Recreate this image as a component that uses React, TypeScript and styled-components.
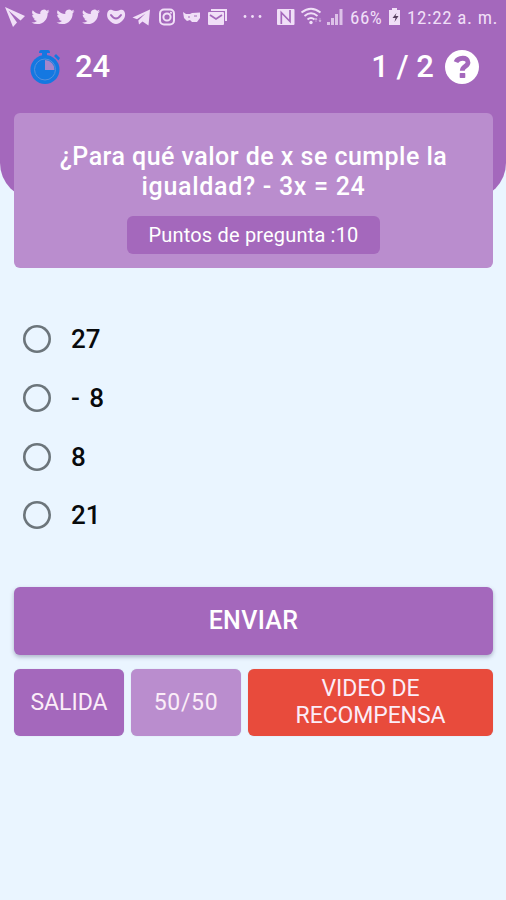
import React from "react";
import styled, { createGlobalStyle } from "styled-components";

const purple = "#a468bc";
const lilac = "#ba8dce";

const GlobalStyle = createGlobalStyle`
  * { box-sizing: border-box; }
  html, body { margin: 0; background: #eaf5ff; }
  body { font-family: Roboto, "Liberation Sans", sans-serif; }
  button { font: inherit; border: 0; padding: 0; }
`;

const Screen = styled.main`
  width: 506px;
  height: 900px;
  overflow: hidden;
  background: #eaf5ff;
`;
const Header = styled.header`
  height: 199px;
  background: ${purple};
  border-radius: 0 0 36px 36px;
  color: #fff;
`;
const StatusBar = styled.div`
  height: 35px;
  display: flex;
  align-items: center;
  color: #f0dff7;
`;
const StatusIcons = styled.svg`
  display: block;
  flex: none;
`;
const StatusText = styled.span<{ $width: number; $spacing: number }>`
  flex: none;
  width: ${(p) => p.$width}px;
  font-family: "Roboto Condensed", Roboto, sans-serif;
  font-size: 19px;
  letter-spacing: ${(p) => p.$spacing}px;
  white-space: nowrap;
`;
const GameBar = styled.div`
  height: 64px;
  display: flex;
  align-items: center;
  padding: 0 27px 0 29px;
`;
const Score = styled.span<{ $word?: number; $push?: boolean }>`
  font-size: 31px;
  font-weight: 500;
  position: relative;
  top: -1px;
  word-spacing: ${(p) => p.$word ?? 0}px;
  margin-left: ${(p) => (p.$push ? "auto" : "13px")};
  white-space: pre;
`;
const Help = styled.svg`
  margin-left: 11px;
`;
const Content = styled.div`
  position: relative;
  margin-top: -86px;
  padding: 0 13px 0 14px;
`;
const QuestionCard = styled.section`
  height: 155px;
  padding-top: 29px;
  border-radius: 6px;
  background: ${lilac};
  color: #fff;
  display: flex;
  flex-direction: column;
  align-items: center;
`;
const QuestionLine = styled.div<{ $spacing: number }>`
  height: 30px;
  line-height: 30px;
  font-size: 25px;
  font-weight: 500;
  letter-spacing: ${(p) => p.$spacing}px;
  white-space: nowrap;
`;
const Points = styled.div`
  margin-top: 14px;
  width: 253px;
  height: 38px;
  line-height: 38px;
  border-radius: 6px;
  background: ${purple};
  font-size: 20px;
  letter-spacing: 0.18px;
  text-align: center;
`;
const Options = styled.div`
  margin-top: 42px;
  padding-left: 9px;
`;
const Option = styled.label`
  height: 58.7px;
  display: flex;
  align-items: center;
  gap: 20px;
  color: #080a0c;
  font-size: 26px;
  font-weight: 500;
  word-spacing: 3px;
`;
const Radio = styled.input`
  appearance: none;
  width: 28px;
  height: 28px;
  margin: 0;
  border-radius: 50%;
  box-shadow: inset 0 0 0 2.6px #6c757b;
`;
const Submit = styled.button`
  display: block;
  width: 100%;
  height: 68px;
  margin-top: 42px;
  padding-bottom: 1px;
  border-radius: 6px;
  background: ${purple};
  color: #fff;
  font-size: 25px;
  font-weight: 500;
  letter-spacing: 0.35px;
  box-shadow: 0 2px 4px rgba(70, 70, 110, 0.38);
`;
const Actions = styled.div`
  display: grid;
  grid-template-columns: 110px 110px 245px;
  gap: 7px;
  margin-top: 14px;
`;
const Action = styled.button<{ $color: string; $spacing: number }>`
  height: 67px;
  border-radius: 6px;
  background: ${(p) => p.$color};
  color: #fbedf8;
  font-size: 23px;
  line-height: 27px;
  letter-spacing: ${(p) => p.$spacing}px;
  box-shadow: 0 0 1px rgba(70, 70, 110, 0.3);
`;

const BIRD =
  "M23.95 4.57a10 10 0 0 1-2.82.77 4.96 4.96 0 0 0 2.16-2.72c-.95.55-2 .96-3.13 1.18a4.92 4.92 0 0 0-8.38 4.48C7.69 8.1 4.07 6.13 1.64 3.16a4.92 4.92 0 0 0 1.52 6.57 4.9 4.9 0 0 1-2.23-.61v.06a4.92 4.92 0 0 0 3.95 4.83 5 5 0 0 1-2.21.08 4.94 4.94 0 0 0 4.6 3.42A9.87 9.87 0 0 1 0 19.54a13.99 13.99 0 0 0 7.55 2.21c9.05 0 14-7.5 14-13.98 0-.21 0-.42-.02-.63a9.94 9.94 0 0 0 2.42-2.57z";

const Notifications = () => (
  <StatusIcons width="350" height="35" viewBox="0 0 350 35" fill="currentColor">
    <path d="M5 7 25 16 20.5 20.5 8.5 10.5 17 22.5 13 27Z" />
    {[31.5, 56.5, 82].map((x) => (
      <path key={x} d={BIRD} transform={`translate(${x} 7.8) scale(.75)`} />
    ))}
    <path d="M112 10Q116 12 120 10C125 8 127 16 123 20Q116 28 109 20C105 15 108 8 112 10Z" />
    <path d="M111 15Q116 22 121 15" fill="none" stroke={purple} strokeWidth="2" strokeLinecap="round" />
    <path d="M132.5 17.5 150 9.5 148.5 25.5 142.5 21.5 139 24.5 138.3 20.5 145.5 13.5 137 19.3Z" />
    <g fill="none" stroke="currentColor" strokeWidth="2">
      <rect x="160" y="9.5" width="14" height="15" rx="4" />
      <circle cx="167" cy="17" r="3.6" />
    </g>
    <circle cx="171" cy="12.8" r="1" />
    <path d="M183 12 186 14H190L192 13 200 12.5V18L197 22H192L190 20 187 21 184 18Z" />
    <path d="M188 17h2m4-1h3" stroke={purple} strokeWidth="1" />
    <path d="M211 9H227V21H225V11H211Z" />
    <rect x="208" y="12" width="16" height="13" rx="1" />
    <path d="m210 15 6 4 6-4" fill="none" stroke={purple} strokeWidth="1.8" />
    <circle cx="245" cy="16.5" r="1.4" />
    <circle cx="252.5" cy="16.5" r="1.4" />
    <circle cx="260" cy="16.5" r="1.4" />
    <rect x="277" y="9" width="17.5" height="16" rx="1" />
    <path d="M281.3 24V12.5L290 21.5V10" fill="none" stroke={purple} strokeWidth="1.7" />
    <g fill="none" stroke="currentColor" strokeWidth="1.9">
      <path d="M301.5 12.5Q311 5 320.5 12.5M304.5 16Q311 10.5 317.5 16M307.5 19.5Q311 16.5 314.5 19.5" />
    </g>
    <circle cx="311" cy="22.5" r="1.7" />
    <path d="M316 22v-4m-1 2 1-2 1 2M320 18v4m-1-2 1 2 1-2" stroke="currentColor" strokeWidth=".7" opacity=".6" />
    <path d="M327 25v-3h3v3ZM331 25v-7h3v7ZM335 25V14h3v11ZM339.5 25V9h3v16Z" opacity=".75" />
  </StatusIcons>
);

const Battery = () => (
  <StatusIcons width="21" height="35" viewBox="0 0 21 35" fill="currentColor">
    <path d="M6 8h5v2h3v15H3V10h3Z" />
    <path d="m10.5 13-4 5h3l-1 4 4-6h-3Z" fill="#57405f" />
  </StatusIcons>
);

const Stopwatch = () => (
  <svg width="33" height="36" viewBox="0 0 33 36">
    <g fill="#1478e1">
      <path d="M12 1h7q2 0 2 3h-3v4h-5V4h-3q0-3 2-3ZM25 7l2-2 4 4-1.5 2.5Z" />
      <circle cx="16" cy="20.5" r="14.5" />
    </g>
    <circle cx="16" cy="20.5" r="10.5" fill="none" stroke="#5690dc" />
    <path d="M16 11v10h9.5A9.5 9.5 0 0 0 16 11Z" fill="#a486cb" />
  </svg>
);

const answers = ["27", "- 8", "8", "21"];

export default function App() {
  return (
    <>
      <GlobalStyle />
      <Screen>
        <Header>
          <StatusBar>
            <Notifications />
            <StatusText $width={36} $spacing={0.5}>66%</StatusText>
            <Battery />
            <StatusText $width={97} $spacing={0.65}>12:22 a. m.</StatusText>
          </StatusBar>
          <GameBar>
            <Stopwatch />
            <Score>24</Score>
            <Score $push>1 / 2</Score>
            <Help width="34" height="34" viewBox="0 0 34 34">
              <circle cx="17" cy="17" r="17" fill="#fff" />
              <path
                d="M11 12.2C13 7.2 23 6.6 23 12.5C23 16.5 17.3 16 17.3 20.8"
                fill="none"
                stroke={purple}
                strokeWidth="4.8"
              />
              <rect x="14.7" y="23" width="5.6" height="5" rx=".7" fill={purple} />
            </Help>
          </GameBar>
        </Header>
        <Content>
          <QuestionCard>
            <QuestionLine $spacing={0.47}>¿Para qué valor de x se cumple la</QuestionLine>
            <QuestionLine $spacing={0.7}>igualdad? - 3x = 24</QuestionLine>
            <Points>Puntos de pregunta :10</Points>
          </QuestionCard>
          <Options>
            {answers.map((answer) => (
              <Option key={answer}>
                <Radio type="radio" name="answer" />
                {answer}
              </Option>
            ))}
          </Options>
          <Submit>ENVIAR</Submit>
          <Actions>
            <Action $color={purple} $spacing={0}>SALIDA</Action>
            <Action $color={lilac} $spacing={0.7}>50/50</Action>
            <Action $color="#e84b3c" $spacing={-0.1}>
              VIDEO DE<br />RECOMPENSA
            </Action>
          </Actions>
        </Content>
      </Screen>
    </>
  );
}
